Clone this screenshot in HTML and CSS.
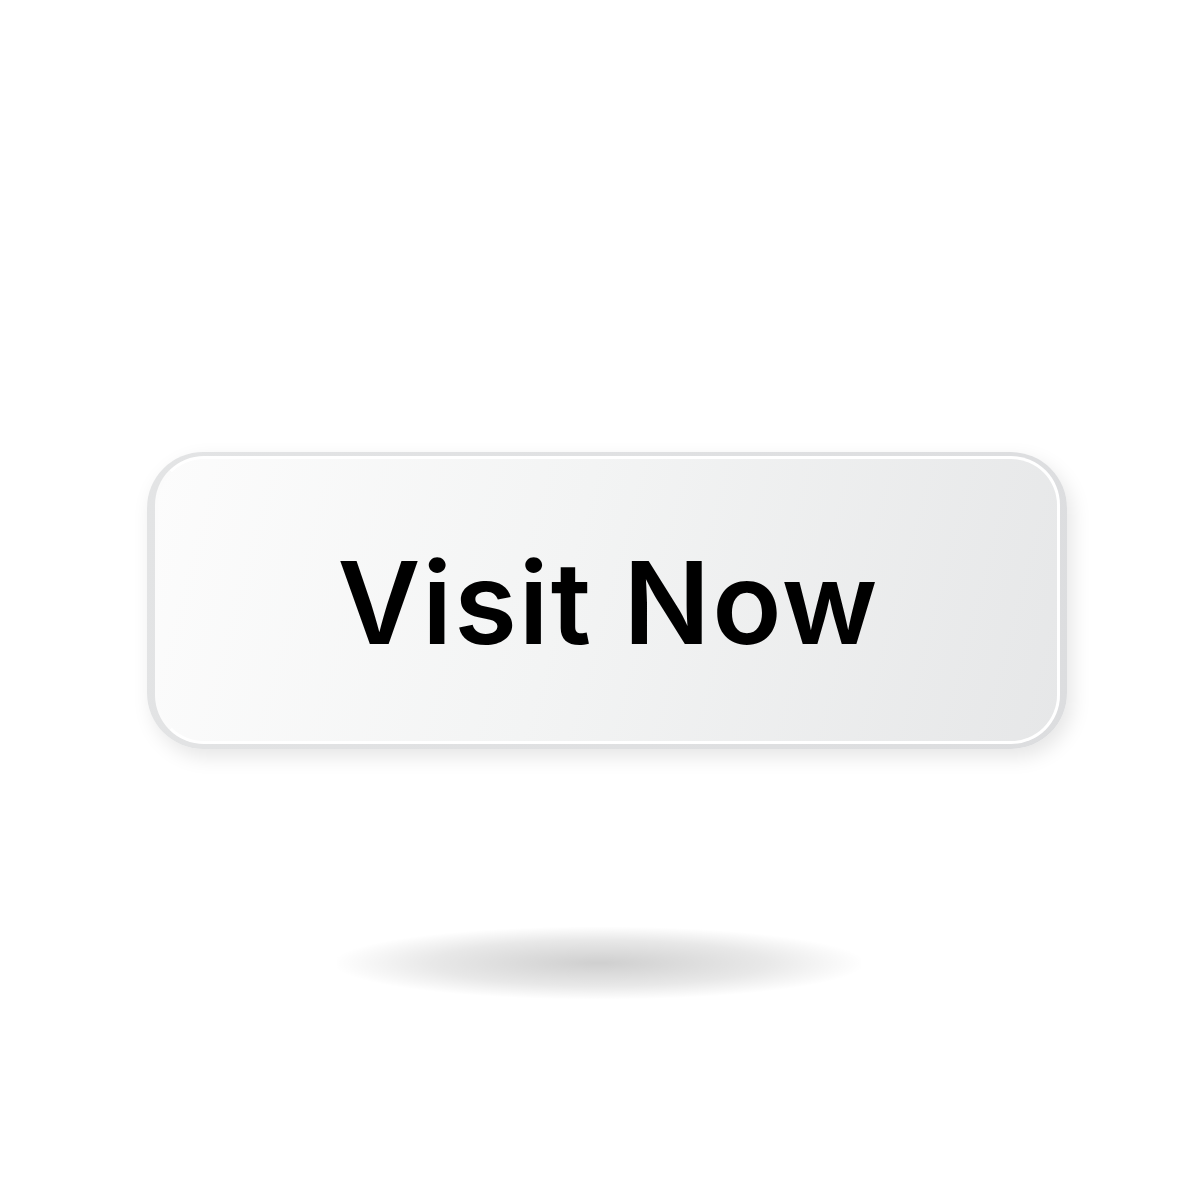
FILE: index.html
```html
<!DOCTYPE html>
<html lang="en">
<head>
  <meta charset="UTF-8">
  <meta name="viewport" content="width=device-width, initial-scale=1.0">
  <link rel="stylesheet" href="styles.css">
  <title>Visit Now</title>
</head>
<body>
  <div class="stage">
    <div class="btn-rim">
      <a class="btn-face" href="#">Visit Now</a>
    </div>
    <div class="floor-shadow"></div>
  </div>
</body>
</html>
```

FILE: styles.css
```css
body {
  margin: 0;
  background-color: #ffffff;
  font-family: 'Inter', 'Noto Sans', sans-serif;
}

.stage {
  width: 1200px;
  height: 1200px;
  padding-top: 452px;
  box-sizing: border-box;
}

.btn-rim {
  width: 920px;
  height: 297px;
  margin-left: 147px;
  padding: 4px 7px 5px 8px;
  box-sizing: border-box;
  background: linear-gradient(110deg, #e3e4e5, #dcdddf);
  border-radius: 56px;
  box-shadow: 5px 8px 20px rgba(0, 0, 0, 0.10);
}

.btn-face {
  display: flex;
  align-items: center;
  justify-content: center;
  height: 100%;
  box-sizing: border-box;
  padding-top: 4px;
  padding-left: 2px;
  border: 3px solid #ffffff;
  border-left-color: #fbfbfb;
  border-radius: 49px;
  background: linear-gradient(105deg, #fcfcfc 0%, #f3f4f4 45%, #e6e7e8 100%);
  color: #000000;
  font-size: 114px;
  font-weight: 600;
  letter-spacing: 2px;
  text-decoration: none;
}

.floor-shadow {
  width: 524px;
  height: 72px;
  margin-top: 178px;
  margin-left: 337px;
  background: radial-gradient(ellipse at center, rgba(0, 0, 0, 0.19) 0%, rgba(0, 0, 0, 0.09) 45%, rgba(0, 0, 0, 0) 72%);
}
```
